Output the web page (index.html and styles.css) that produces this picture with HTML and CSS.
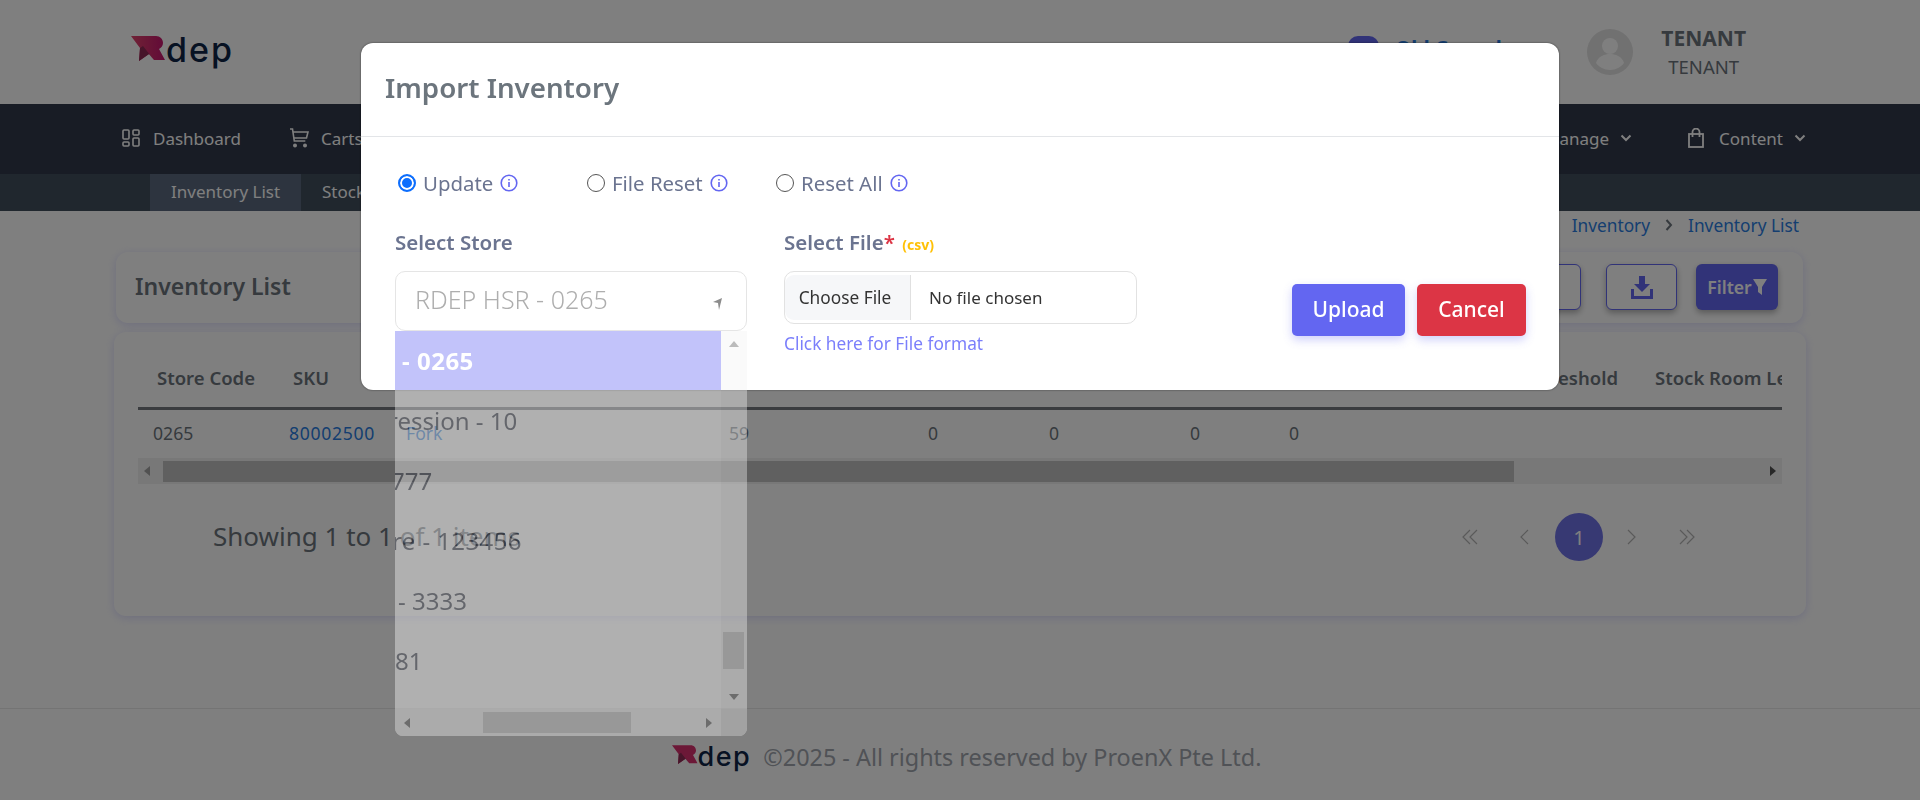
FILE: index.html
```html
<!DOCTYPE html>
<html lang="en">
<head>
    <meta charset="UTF-8">
    <meta name="viewport" content="width=device-width, initial-scale=1.0">
    <title>Inventory List</title>
    <link rel="stylesheet" href="styles.css">
</head>
<body>
    <div class="page">
        <header class="top-header">
            <div class="logo">
                <svg class="logo-mark" width="36" height="26" viewBox="0 0 36 26">
                    <defs>
                        <linearGradient id="markFill" x1="0" y1="0" x2="1" y2="0">
                            <stop offset="0" stop-color="#e0466c"/>
                            <stop offset="1" stop-color="#c4146e"/>
                        </linearGradient>
                    </defs>
                    <path fill="url(#markFill)" d="M0 0h25c4 0 7 3 7 7 0 3-2 5-4 6l6 11H23l-5-6-10 7 1-13z"/>
                    <polygon fill="#8e2b55" points="9,12 12,10 23,24 18,18 8,25"/>
                </svg>
                <span class="logo-text">dep</span>
            </div>
            <div class="header-right">
                <span class="console-badge"></span>
                <span class="console-link">Old Console</span>
                <svg class="avatar" width="46" height="46" viewBox="0 0 46 46">
                    <circle cx="23" cy="23" r="23" fill="#e2e2e2"/>
                    <circle cx="23" cy="17" r="8" fill="#fff"/>
                    <path d="M9 34c2-7 9-9 14-9s12 2 14 9c-3 4-8 7-14 7s-11-3-14-7z" fill="#fff"/>
                </svg>
                <div class="user-info">
                    <div class="user-name">TENANT</div>
                    <div class="user-role">TENANT</div>
                </div>
            </div>
        </header>

        <nav class="main-nav">
            <a class="nav-item nav-dashboard">
                <svg width="18" height="18" viewBox="0 0 18 18" fill="none" stroke="currentColor" stroke-width="1.6">
                    <rect x="1" y="1" width="6" height="9" rx="1"/>
                    <rect x="11" y="1" width="6" height="5" rx="1"/>
                    <rect x="1" y="13" width="6" height="4" rx="1"/>
                    <rect x="11" y="9" width="6" height="8" rx="1"/>
                </svg>
                Dashboard
            </a>
            <a class="nav-item nav-carts">
                <svg width="20" height="20" viewBox="0 0 20 20" fill="none" stroke="currentColor" stroke-width="1.6">
                    <path d="M1 1h2.500l1.800 12h11"/>
                    <path d="M4 4h15l-1.500 6H5"/>
                    <circle cx="6" cy="17.500" r="1.200" fill="currentColor"/>
                    <circle cx="16" cy="17.500" r="1.200" fill="currentColor"/>
                </svg>
                Carts
            </a>
            <a class="nav-item nav-manage">
                Manage
                <svg class="chev" width="12" height="8" viewBox="0 0 12 8" fill="none" stroke="currentColor" stroke-width="2"><path d="M1.500 1.500 6 6l4.500-4.500"/></svg>
            </a>
            <a class="nav-item nav-content">
                <svg width="16" height="20" viewBox="0 0 16 20" fill="none" stroke="currentColor" stroke-width="1.800">
                    <rect x="1" y="6" width="14" height="13"/>
                    <path d="M4.500 9V4a3.500 3.500 0 0 1 7 0v5"/>
                </svg>
                Content
                <svg class="chev" width="12" height="8" viewBox="0 0 12 8" fill="none" stroke="currentColor" stroke-width="2"><path d="M1.500 1.500 6 6l4.500-4.500"/></svg>
            </a>
        </nav>

        <div class="sub-nav">
            <a class="sub-item active">Inventory List</a>
            <a class="sub-item">Stock</a>
        </div>

        <div class="breadcrumb">
            <svg width="8" height="12" viewBox="0 0 8 12" fill="none" stroke="#6c757d" stroke-width="2"><path d="M1.500 1 6 6l-4.500 5"/></svg>
            <a>Inventory</a>
            <svg width="8" height="12" viewBox="0 0 8 12" fill="none" stroke="#6c757d" stroke-width="2"><path d="M1.500 1 6 6l-4.500 5"/></svg>
            <a>Inventory List</a>
        </div>

        <section class="card title-card">
            <h2>Inventory List</h2>
            <div class="card-actions">
                <button class="btn-outline btn-wide"></button>
                <button class="btn-outline btn-icon">
                    <svg width="24" height="24" viewBox="0 0 24 24" fill="#6366f1">
                        <path d="M9 1h6v8h5l-8 8-8-8h5z"/>
                        <path d="M1 14h3v7h16v-7h3v10H1z"/>
                    </svg>
                </button>
                <button class="btn-filter">
                    Filter
                    <svg width="14" height="16" viewBox="0 0 14 16" fill="#fff"><path d="M0 0h14L9 8v8l-4-3V8z"/></svg>
                </button>
            </div>
        </section>

        <section class="card table-card">
            <div class="table-wrap">
                <table class="inv-table">
                    <colgroup>
                        <col class="c-store"><col class="c-sku"><col class="c-name"><col class="c-stock">
                        <col class="c-num1"><col class="c-num2"><col class="c-num3"><col class="c-thresh"><col class="c-room">
                    </colgroup>
                    <thead>
                        <tr>
                            <th>Store Code</th><th>SKU</th><th>Product Name</th><th>Stock</th>
                            <th>Sold</th><th>Hold</th><th>Damaged</th><th class="th-right">Threshold</th><th>Stock Room Level</th>
                        </tr>
                    </thead>
                    <tbody>
                        <tr>
                            <td>0265</td>
                            <td><a class="sku-link">80002500</a></td>
                            <td class="td-name">Fork</td>
                            <td>59</td><td>0</td><td>0</td><td>0</td><td>0</td><td></td>
                        </tr>
                    </tbody>
                </table>
            </div>
            <div class="h-scroll">
                <span class="arrow-left dim"></span>
                <span class="h-thumb"></span>
                <span class="arrow-right"></span>
            </div>
            <div class="table-foot">
                <span class="showing">Showing 1 to 1 of 1 items</span>
                <div class="pager">
                    <svg width="16" height="16" viewBox="0 0 16 16" fill="none" stroke="#b4b4b4" stroke-width="1.200"><path d="M8 1 1 8l7 7M15 1 8 8l7 7"/></svg>
                    <svg class="pg-single" width="10" height="16" viewBox="0 0 10 16" fill="none" stroke="#b4b4b4" stroke-width="1.200"><path d="M9 1 2 8l7 7"/></svg>
                    <span class="pg-current">1</span>
                    <svg class="pg-single" width="10" height="16" viewBox="0 0 10 16" fill="none" stroke="#b4b4b4" stroke-width="1.200"><path d="m1 1 7 7-7 7"/></svg>
                    <svg width="16" height="16" viewBox="0 0 16 16" fill="none" stroke="#b4b4b4" stroke-width="1.200"><path d="m1 1 7 7-7 7M8 1l7 7-7 7"/></svg>
                </div>
            </div>
        </section>

        <footer class="page-footer">
            <svg class="foot-mark" width="27" height="20" viewBox="0 0 36 26">
                <path fill="#d9306f" d="M0 0h25c4 0 7 3 7 7 0 3-2 5-4 6l6 11H23l-5-6-10 7 1-13z"/>
                <polygon fill="#8e2b55" points="9,12 12,10 23,24 18,18 8,25"/>
            </svg>
            <span class="foot-logo">dep</span>
            <span class="foot-text">©2025 - All rights reserved by ProenX Pte Ltd.</span>
        </footer>
    </div>

    <div class="backdrop"></div>

    <div class="modal">
        <div class="modal-header">
            <h3>Import Inventory</h3>
        </div>
        <div class="modal-body">
            <div class="radio-row">
                <label class="radio-item">
                    <span class="radio checked"></span>Update
                    <svg class="info" width="18" height="18" viewBox="0 0 18 18" fill="none" stroke="#6366f1" stroke-width="1.600"><circle cx="9" cy="9" r="7.800"/><path d="M9 8v5M9 5v1.500"/></svg>
                </label>
                <label class="radio-item">
                    <span class="radio"></span>File Reset
                    <svg class="info" width="18" height="18" viewBox="0 0 18 18" fill="none" stroke="#6366f1" stroke-width="1.600"><circle cx="9" cy="9" r="7.800"/><path d="M9 8v5M9 5v1.500"/></svg>
                </label>
                <label class="radio-item">
                    <span class="radio"></span>Reset All
                    <svg class="info" width="18" height="18" viewBox="0 0 18 18" fill="none" stroke="#6366f1" stroke-width="1.600"><circle cx="9" cy="9" r="7.800"/><path d="M9 8v5M9 5v1.500"/></svg>
                </label>
            </div>
            <div class="form-row">
                <div class="field field-store">
                    <div class="field-label">Select Store</div>
                    <div class="select-box">
                        <span>RDEP HSR - 0265</span>
                        <svg width="9" height="12" viewBox="0 0 9 12" fill="#8c8c8c"><polygon points="9,0 0,4 5,5 6,12"/></svg>
                    </div>
                </div>
                <div class="field field-file">
                    <div class="field-label">Select File<span class="req">*</span> <span class="csv">(csv)</span></div>
                    <div class="file-box">
                        <span class="file-btn">Choose File</span>
                        <span class="file-name">No file chosen</span>
                    </div>
                    <a class="format-link">Click here for File format</a>
                </div>
                <div class="modal-actions">
                    <button class="btn-upload">Upload</button>
                    <button class="btn-cancel">Cancel</button>
                </div>
            </div>
        </div>

        <div class="dropdown">
            <ul class="dd-list">
                <li class="selected"><span>- 0265</span></li>
                <li><span class="cut-a">ression - 10</span></li>
                <li><span class="cut-b">777</span></li>
                <li><span class="cut-c">re - 123456</span></li>
                <li><span class="cut-d">- 3333</span></li>
                <li><span class="cut-e">81</span></li>
            </ul>
            <div class="dd-vbar">
                <span class="tri-up"></span>
                <span class="dd-vthumb"></span>
                <span class="tri-down"></span>
            </div>
            <div class="dd-hbar">
                <span class="arrow-left"></span>
                <span class="dd-hthumb"></span>
                <span class="arrow-right"></span>
            </div>
            <div class="dd-corner"></div>
        </div>
    </div>
</body>
</html>
```

FILE: styles.css
```css
* {
    box-sizing: border-box;
}
html, body {
    margin: 0;
    height: 800px;
    overflow: hidden;
}
body {
    font-family: "Noto Sans", "Lato", sans-serif;
    color: #6c757d;
    background: #fff;
}
.page {
    height: 800px;
    display: flex;
    flex-direction: column;
}

/* header */
.top-header {
    height: 104px;
    flex: none;
    display: flex;
    align-items: flex-start;
    padding-left: 131px;
}
.logo {
    display: flex;
    align-items: flex-start;
    margin-top: 36px;
}
.logo-text {
    font-family: "Inter", sans-serif;
    font-size: 34px;
    line-height: 28px;
    font-weight: 500;
    letter-spacing: 2px;
    color: #0f2447;
    margin-left: -1px;
}
.header-right {
    margin-left: auto;
    display: flex;
    align-items: flex-start;
    padding-right: 174px;
    padding-top: 28px;
}
.console-badge {
    width: 31px;
    height: 32px;
    margin-top: 8px;
    background: #6366f1;
    border-radius: 10px;
}
.console-link {
    margin: 6px 0 0 16px;
    width: 192px;
    font-size: 20px;
    font-weight: 700;
    color: #2a7de1;
}
.avatar {
    margin-top: 1px;
}
.user-info {
    margin-left: 28px;
    text-align: center;
}
.user-name {
    font-size: 21px;
    font-weight: 700;
    line-height: 24px;
    margin-top: -2px;
}
.user-role {
    font-size: 18.5px;
    line-height: 24px;
    margin-top: 5px;
}

/* nav */
.main-nav {
    height: 70px;
    flex: none;
    background: #30384a;
    display: flex;
    align-items: center;
    padding: 0 0 2px 122px;
    color: #fff;
    font-size: 17px;
}
.nav-item {
    display: flex;
    align-items: center;
}
.nav-dashboard svg {
    margin-right: 13px;
}
.nav-carts {
    margin-left: 48px;
}
.nav-carts svg {
    margin-right: 12px;
}
.nav-manage {
    margin-left: auto;
}
.chev {
    margin-left: 11px;
}
.nav-content {
    margin-left: 56px;
    margin-right: 114px;
}
.nav-content svg:first-child {
    margin-right: 15px;
}
.sub-nav {
    height: 37px;
    flex: none;
    background: #404e5c;
    display: flex;
    padding-left: 150px;
    color: #fff;
    font-size: 17px;
}
.sub-item {
    display: flex;
    align-items: center;
    padding: 0 21px 2px;
}
.sub-item.active {
    width: 151px;
    background: #5a687e;
    white-space: nowrap;
}

/* breadcrumb */
.breadcrumb {
    height: 41px;
    flex: none;
    display: flex;
    align-items: center;
    justify-content: flex-end;
    gap: 13px;
    padding: 0 121px 13px 0;
    font-size: 17.3px;
    color: #2a7de1;
}
.breadcrumb svg {
    margin: 0 2px;
}

/* cards */
.card {
    background: #fff;
    border-radius: 12px;
    box-shadow: 0 2px 10px rgba(99, 102, 241, 0.22);
}
.title-card {
    height: 71px;
    flex: none;
    margin: 0 117px 0 116px;
    display: flex;
    align-items: center;
    padding-left: 19px;
}
.title-card h2 {
    margin: 0 0 4px;
    font-size: 23px;
    font-weight: 600;
    color: #6c757d;
}
.card-actions {
    margin-left: auto;
    display: flex;
    align-items: center;
    gap: 25px;
    padding: 0 25px 2px 0;
}
.card-actions button {
    height: 46px;
    border-radius: 6px;
    box-shadow: 0 3px 6px rgba(0, 0, 0, 0.3);
}
.btn-outline {
    background: #fff;
    border: 1.5px solid #6366f1;
    padding: 0;
}
.btn-wide {
    width: 90px;
}
.btn-icon {
    width: 71px;
    display: flex;
    align-items: center;
    justify-content: center;
}
.btn-filter {
    width: 82px;
    margin-left: -6px;
    background: #6366f1;
    color: #fff;
    border: none;
    font-family: inherit;
    font-size: 17.6px;
    font-weight: 600;
    display: flex;
    align-items: center;
    justify-content: center;
    gap: 1px;
}
.table-card {
    height: 284px;
    flex: none;
    margin: 9px 114px 0 114px;
    padding: 0 24px;
}
.table-wrap {
    overflow: hidden;
}
.inv-table {
    table-layout: fixed;
    width: 1900px;
    border-collapse: collapse;
}
.c-store { width: 136px; }
.c-sku { width: 117px; }
.c-name { width: 323px; }
.c-stock { width: 199px; }
.c-num1 { width: 121px; }
.c-num2 { width: 141px; }
.c-num3 { width: 99px; }
.c-thresh { width: 362px; }
.c-room { width: 402px; }
.inv-table th {
    height: 76px;
    padding: 17px 0 0 19px;
    text-align: left;
    font-size: 18.5px;
    font-weight: 600;
    white-space: nowrap;
    border-bottom: 3px solid #74797f;
}
.inv-table .th-right {
    text-align: right;
    padding-right: 18px;
}
.inv-table td {
    height: 50px;
    padding: 0 0 2px 15px;
    font-size: 17.6px;
}
.sku-link {
    color: #2a7de1;
    letter-spacing: 0.7px;
}
.inv-table .td-name {
    color: #2a7de1;
}

.h-scroll {
    height: 26px;
    background: #f1f1f1;
    position: relative;
    display: flex;
    align-items: center;
    justify-content: space-between;
    padding: 0 6px;
}
.h-thumb {
    position: absolute;
    left: 25px;
    top: 3px;
    bottom: 2px;
    width: 1351px;
    background: #c1c1c1;
}
.arrow-left, .arrow-right {
    width: 0;
    height: 0;
    border-top: 5.500px solid transparent;
    border-bottom: 5.500px solid transparent;
}
.arrow-left {
    border-right: 6px solid #505050;
}
.arrow-left.dim {
    border-right-color: #a3a3a3;
}
.arrow-right {
    border-left: 6px solid #505050;
}
.table-foot {
    display: flex;
    align-items: center;
    margin-top: 26px;
    height: 54px;
    padding-left: 99px;
    margin-left: -24px;
}
.showing {
    font-size: 26px;
    margin-top: -2px;
}
.pager {
    margin-left: auto;
    display: flex;
    align-items: center;
    margin-right: 87px;
}
.pg-single {
    margin-left: 41px;
}
.pg-current {
    width: 48px;
    height: 48px;
    border-radius: 50%;
    background: #6f72e6;
    color: #fff;
    display: flex;
    align-items: center;
    justify-content: center;
    font-size: 20px;
    margin: 0 24px 0 26px;
}
.pg-current + .pg-single {
    margin-left: 0;
}
.pager .pg-current + .pg-single + svg {
    margin-left: 42px;
}

/* footer */
.page-footer {
    margin-top: auto;
    height: 92px;
    flex: none;
    border-top: 1px solid #e8e8e8;
    display: flex;
    align-items: flex-start;
    justify-content: center;
    padding: 36px 0 0 13px;
    color: #a0a5ad;
    font-size: 23.4px;
}
.foot-logo {
    font-family: "Inter", sans-serif;
    font-size: 27px;
    line-height: 24px;
    font-weight: 500;
    letter-spacing: 1.5px;
    color: #0f2447;
    margin: 0 12px 0 -1px;
}
.foot-text {
    line-height: 24px;
}

/* modal */
.backdrop {
    position: fixed;
    inset: 0;
    background: rgba(0, 0, 0, 0.5);
}
.modal {
    position: absolute;
    left: 361px;
    top: 43px;
    width: 1198px;
    height: 347px;
    background: #fff;
    border-radius: 12px;
    box-shadow: 0 0 2px rgba(0, 0, 0, 0.6);
}
.modal-header {
    height: 94px;
    border-bottom: 1px solid #e3e5e8;
    padding: 0 24px 5px;
    display: flex;
    align-items: center;
}
.modal-header h3 {
    margin: 0;
    font-size: 27.7px;
    font-weight: 600;
    color: #6c757d;
}
.modal-body {
    padding: 0 33px 0 34px;
}
.radio-row {
    display: flex;
    padding: 34px 0 0 3px;
    height: 94px;
}
.radio-item {
    width: 189px;
    height: 24px;
    display: flex;
    align-items: center;
    font-size: 20.4px;
    color: #6b7490;
}
.radio {
    width: 18px;
    height: 18px;
    border: 1.5px solid #555;
    border-radius: 50%;
    margin-right: 7px;
    flex: none;
}
.radio.checked {
    border: 2px solid #0d6efd;
    background: #0d6efd;
    box-shadow: inset 0 0 0 2px #fff;
}
.info {
    margin-left: 7px;
}
.form-row {
    display: flex;
}
.field-label {
    height: 24px;
    font-size: 20.5px;
    font-weight: 600;
    line-height: 22px;
    color: #6b7490;
    margin-bottom: 16px;
}
.field-store {
    width: 352px;
}
.field-file {
    width: 353px;
    margin-left: 37px;
}
.req {
    color: #dc3545;
}
.csv {
    font-size: 14px;
    font-weight: 700;
    color: #ffc107;
    margin-left: 2px;
}
.select-box {
    height: 60px;
    border: 1px solid #e5e5e5;
    border-radius: 10px;
    display: flex;
    align-items: center;
    justify-content: space-between;
    padding: 0 24px 0 19px;
    font-size: 25px;
    font-weight: 300;
    color: #aeaeae;
}
.select-box span {
    margin-top: -5px;
}
.select-box svg {
    margin-top: 5px;
}
.file-box {
    height: 53px;
    border: 1px solid #e2e2e2;
    border-radius: 10px;
    padding: 3px 0;
    display: flex;
    align-items: stretch;
    font-size: 17px;
    color: #333;
}
.file-btn {
    width: 126px;
    background: #f6f7f9;
    border-right: 1px solid #e0e0e0;
    display: flex;
    align-items: center;
    justify-content: center;
    border-radius: 9px 0 0 9px;
    white-space: nowrap;
    padding-right: 5px;
    font-size: 17.3px;
}
.file-name {
    display: flex;
    align-items: center;
    margin-left: 18px;
}
.format-link {
    display: block;
    margin-top: 8px;
    font-size: 17.3px;
    color: #7b7ffb;
}
.modal-actions {
    margin-left: auto;
    display: flex;
    gap: 12px;
    padding-top: 53px;
}
.modal-actions button {
    height: 52px;
    border: none;
    border-radius: 5px;
    color: #fff;
    font-family: inherit;
    font-size: 21px;
    font-weight: 500;
    padding: 0 0 2px;
    box-shadow: 0 4px 10px rgba(99, 102, 241, 0.3);
}
.btn-upload {
    width: 113px;
    background: #6366f1;
}
.btn-cancel {
    width: 109px;
    background: #dc3545;
}

/* open store dropdown, still fading in */
.dropdown {
    position: absolute;
    left: 34px;
    top: 288px;
    width: 352px;
    height: 405px;
    background: #fff;
    opacity: 0.39;
    border-radius: 0 0 8px 8px;
    overflow: hidden;
    display: grid;
    grid-template-columns: 326px 26px;
    grid-template-rows: 378px 27px;
}
.dd-list {
    list-style: none;
    margin: 0;
    padding: 0;
    overflow: hidden;
    font-size: 24px;
    color: #3d4250;
}
.dd-list li {
    height: 60px;
    display: flex;
    align-items: center;
    white-space: nowrap;
    padding-left: 7px;
}
.dd-list li.selected {
    background: #6366f1;
    color: #fff;
    font-weight: 700;
    height: 59px;
    letter-spacing: 0.5px;
}
.cut-a { margin-left: -14px; }
.cut-b { margin-left: -11px; }
.cut-c { margin-left: -10px; letter-spacing: 0.4px; }
.cut-d { margin-left: -4px; }
.cut-e { margin-left: -7px; }
.dd-vbar {
    background: #f1f1f1;
    position: relative;
}
.tri-up, .tri-down {
    position: absolute;
    left: 8px;
    width: 0;
    height: 0;
    border-left: 5.500px solid transparent;
    border-right: 5.500px solid transparent;
}
.tri-up {
    top: 10px;
    border-bottom: 6px solid #505050;
}
.tri-down {
    bottom: 9px;
    border-top: 6px solid #505050;
}
.dd-vthumb {
    position: absolute;
    left: 2px;
    right: 3px;
    top: 301px;
    height: 37px;
    background: #c1c1c1;
}
.dd-hbar {
    background: #f1f1f1;
    position: relative;
    display: flex;
    align-items: center;
    justify-content: space-between;
    padding: 0 9px;
}
.dd-hthumb {
    position: absolute;
    left: 88px;
    width: 148px;
    top: 3px;
    bottom: 3px;
    background: #c1c1c1;
}
.dd-corner {
    background: #dcdcdc;
}
```
